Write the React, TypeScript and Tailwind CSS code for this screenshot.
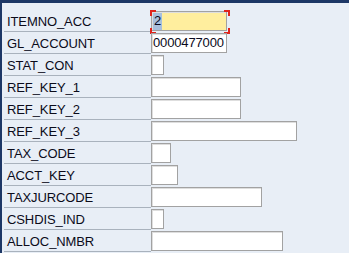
import React from "react";

type Row = { label: string; chars: number; value?: string; focus?: boolean };

const rows: Row[] = [
  { label: "ITEMNO_ACC", chars: 10, value: "2", focus: true },
  { label: "GL_ACCOUNT", chars: 10, value: "0000477000" },
  { label: "STAT_CON", chars: 1 },
  { label: "REF_KEY_1", chars: 12 },
  { label: "REF_KEY_2", chars: 12 },
  { label: "REF_KEY_3", chars: 20 },
  { label: "TAX_CODE", chars: 2 },
  { label: "ACCT_KEY", chars: 3 },
  { label: "TAXJURCODE", chars: 15 },
  { label: "CSHDIS_IND", chars: 1 },
  { label: "ALLOC_NMBR", chars: 18 },
];

function Bracket() {
  return (
    <div className="pointer-events-none absolute left-[-2px] top-[-2px] h-[24px] w-[80px]">
      <div className="absolute left-0 top-0 h-[2px] w-[6px] bg-[#e0241c]" />
      <div className="absolute left-0 top-0 h-[6px] w-[2px] bg-[#e0241c]" />
      <div className="absolute right-0 top-0 h-[2px] w-[6px] bg-[#e0241c]" />
      <div className="absolute right-0 top-0 h-[6px] w-[2px] bg-[#e0241c]" />
      <div className="absolute bottom-0 left-0 h-[2px] w-[6px] bg-[#e0241c]" />
      <div className="absolute bottom-0 left-0 h-[6px] w-[2px] bg-[#e0241c]" />
      <div className="absolute bottom-0 right-0 h-[2px] w-[6px] bg-[#e0241c]" />
      <div className="absolute bottom-0 right-0 h-[6px] w-[2px] bg-[#e0241c]" />
    </div>
  );
}

export default function App() {
  return (
    <div
      className="h-[253px] w-[349px] overflow-hidden bg-[#e8eef6]"
      style={{ fontFamily: '"Liberation Sans", Arial, sans-serif' }}
    >
      <div className="h-[3px] bg-[#1d3766]" />
      <div className="flex h-[250px]">
        <div className="w-[2px] bg-[#1d3766]" />
        <div className="flex flex-1 flex-col pl-[2px] pt-[7px]">
          {rows.map((r) => (
            <div key={r.label} className="flex h-[22px]">
              <div className="flex w-[147px] items-center border-b border-[#a9b2bd] pl-[3px] pt-[2px] text-[13px] tracking-[-0.1px] text-[#0b0b1a]">
                {r.label}
              </div>
              <div className="pt-[1px]">
                <div
                  className={
                    "relative flex h-[20px] items-center border border-[#a2a2a2] pl-[1px] text-[13px] tracking-[-0.15px] text-[#0a0a20] shadow-[inset_1px_1px_0_#dedede] " +
                    (r.focus ? "bg-[#ffee9e]" : "bg-white")
                  }
                  style={{ width: r.chars * 7 + 6 }}
                >
                  {r.focus ? (
                    <>
                      <span className="flex h-[17px] items-center bg-[#a9bfdc] px-[1px]">{r.value}</span>
                      <Bracket />
                    </>
                  ) : (
                    r.value
                  )}
                </div>
              </div>
            </div>
          ))}
        </div>
      </div>
    </div>
  );
}
